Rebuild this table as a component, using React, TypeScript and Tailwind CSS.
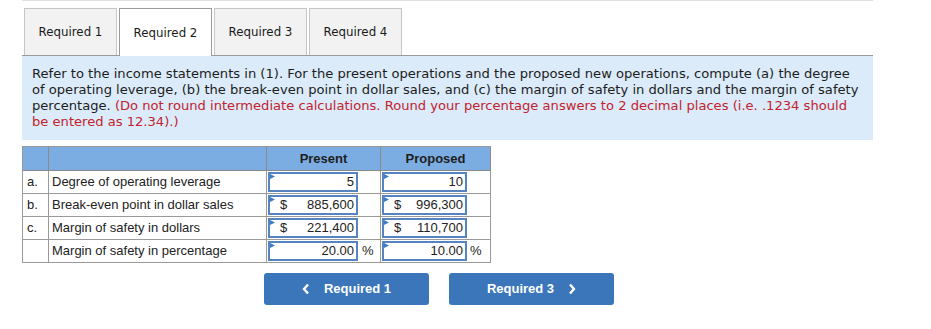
import React from "react";

const tabs = ["Required 1", "Required 2", "Required 3", "Required 4"];

type Row = {
  key: string;
  label: string;
  present: string;
  proposed: string;
  dollar?: boolean;
  percent?: boolean;
};

const rows: Row[] = [
  { key: "a.", label: "Degree of operating leverage", present: "5", proposed: "10" },
  { key: "b.", label: "Break-even point in dollar sales", present: "885,600", proposed: "996,300", dollar: true },
  { key: "c.", label: "Margin of safety in dollars", present: "221,400", proposed: "110,700", dollar: true },
  { key: "", label: "Margin of safety in percentage", present: "20.00", proposed: "10.00", percent: true },
];

function Corner() {
  return (
    <svg className="absolute left-0 top-0" width="5" height="5" viewBox="0 0 5 5">
      <polygon points="0,0 5,2.5 0,5" fill="#3d7cc9" />
    </svg>
  );
}

function AnswerBox({ value, dollar, width, dollarGap }: { value: string; dollar?: boolean; width: string; dollarGap: string }) {
  return (
    <div className={`relative flex h-[20px] items-center border-2 border-[#5585c0] bg-white pr-[2px] ${width}`}>
      <Corner />
      {dollar && <span className={dollarGap}>$</span>}
      <span className="ml-auto">{value}</span>
    </div>
  );
}

export default function App() {
  return (
    <div className="h-[329px] w-[931px] bg-white text-[#222]">
      <div className="ml-[22px] w-[851px] border-t border-[#e0e0e0] pt-[7px]">
        {/* tab strip */}
        <div
          className="flex items-start gap-[2px] border-b border-[#9a9a9a] pl-[2px] text-[11.8px] text-[#1a1a1a]"
          style={{ fontFamily: '"DejaVu Sans", Verdana, sans-serif' }}
        >
          {tabs.map((t, i) =>
            i === 1 ? (
              <div
                key={t}
                className="-mb-px flex h-[48px] w-[93px] items-center justify-center border border-b-0 border-[#9a9a9a] bg-white pt-[2px]"
              >
                {t}
              </div>
            ) : (
              <div
                key={t}
                className="flex h-[47px] w-[93px] items-center justify-center border border-b-0 border-[#c6c6c6] bg-[#f2f2f2] pt-[2px]"
              >
                {t}
              </div>
            )
          )}
        </div>

        {/* instructions */}
        <div
          className="h-[84px] bg-[#dbebf9] pl-[10px] pt-[10px] text-[13.1px] leading-[16px] text-[#1d1d1d]"
          style={{ fontFamily: '"DejaVu Sans", Verdana, sans-serif' }}
        >
          Refer to the income statements in (1). For the present operations and the proposed new operations, compute (a) the degree
          <br />
          of operating leverage, (b) the break-even point in dollar sales, and (c) the margin of safety in dollars and the margin of safety
          <br />
          percentage. <span className="text-[#c3222f]">(Do not round intermediate calculations. Round your percentage answers to 2 decimal places (i.e. .1234 should</span>
          <br />
          <span className="text-[#c3222f]">be entered as 12.34).)</span>
        </div>

        {/* answer table */}
        <div
          className="mt-[6px] w-[469px] border-l border-t border-[#9a9a9a] text-[13px] text-[#222]"
          style={{ fontFamily: '"Liberation Sans", Arial, sans-serif' }}
        >
          <div className="flex h-[24px] bg-[#7badE3] font-bold text-[#1e1e1e]">
            <div className="w-[26px] border-b border-r border-[#8a8a8a]" />
            <div className="w-[218px] border-b border-r border-[#8a8a8a]" />
            <div className="flex w-[114px] items-center justify-center border-b border-r border-[#8a8a8a]">Present</div>
            <div className="flex w-[110px] items-center justify-center border-b border-r border-[#8a8a8a]">Proposed</div>
          </div>
          {rows.map((r) => (
            <div key={r.label} className="flex h-[23px]">
              <div className="flex w-[26px] items-center border-b border-r border-[#9a9a9a] pl-[4px]">{r.key}</div>
              <div className="flex w-[218px] items-center border-b border-r border-[#9a9a9a] pl-[3px]">{r.label}</div>
              <div className="flex w-[114px] items-center border-b border-r border-[#9a9a9a] pl-[1px]">
                <AnswerBox value={r.present} dollar={r.dollar} width="w-[90px]" dollarGap="ml-[10px]" />
                {r.percent && <span className="ml-[4px]">%</span>}
              </div>
              <div className="flex w-[110px] items-center border-b border-r border-[#9a9a9a] pl-[1px]">
                <AnswerBox value={r.proposed} dollar={r.dollar} width="w-[85px]" dollarGap="ml-[10px]" />
                {r.percent && <span className="ml-[3px]">%</span>}
              </div>
            </div>
          ))}
        </div>

        {/* navigation */}
        <div
          className="ml-[242px] mt-[10px] flex gap-[20px] text-[13px] font-bold text-white"
          style={{ fontFamily: '"Liberation Sans", Arial, sans-serif' }}
        >
          <button className="flex h-[32px] w-[165px] items-center justify-center gap-[14px] rounded-[3px] bg-[#3a76b9]">
            <svg width="8" height="12" viewBox="0 0 8 12">
              <polyline points="6,1.5 2,6 6,10.5" fill="none" stroke="white" strokeWidth="2.4" />
            </svg>
            <span>Required 1</span>
          </button>
          <button className="flex h-[32px] w-[165px] items-center justify-center gap-[14px] rounded-[3px] bg-[#3a76b9]">
            <span>Required 3</span>
            <svg width="8" height="12" viewBox="0 0 8 12">
              <polyline points="2,1.5 6,6 2,10.5" fill="none" stroke="white" strokeWidth="2.4" />
            </svg>
          </button>
        </div>
      </div>
    </div>
  );
}
